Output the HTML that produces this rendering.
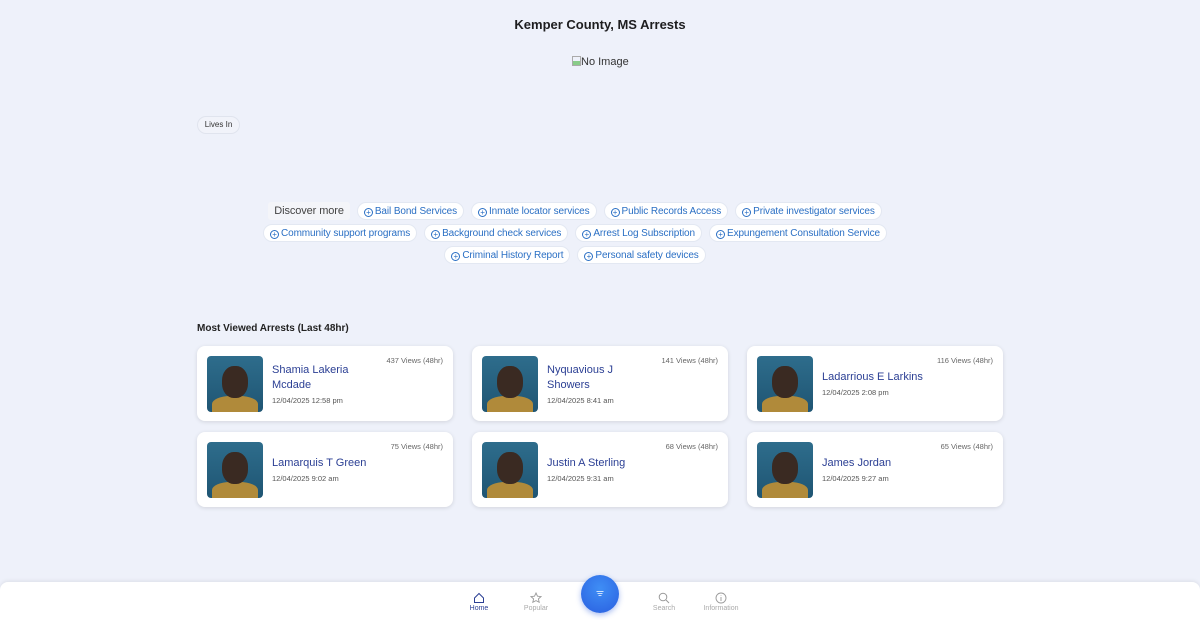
<!DOCTYPE html>
<html><head><meta charset="utf-8"><style>
*{box-sizing:border-box;margin:0;padding:0}
body{width:1200px;height:620px;overflow:hidden;background:#eef1fa;font-family:"Liberation Sans",sans-serif;position:relative;color:#222}
h1{position:absolute;top:17px;left:0;width:1200px;text-align:center;font-size:13px;font-weight:bold;color:#1d1d1f}
.noimg{position:absolute;top:56px;left:572px;font-size:11px;color:#333}
.noimg span{display:inline-block;width:9px;height:10px;border:1px solid #aaa;background:linear-gradient(#8c8 0 0) bottom/100% 4px no-repeat;vertical-align:-1px}
.lives{position:absolute;top:116px;left:197px;height:18px;width:43px;border:1px solid #e0e4ee;border-radius:9px;font-size:8px;line-height:16px;text-align:center;color:#333;background:#f1f3fa}
.pills{position:absolute;top:202px;left:240px;width:670px;display:flex;flex-wrap:wrap;justify-content:center;gap:4px 7px}
.p{height:18px;padding:0 6px;border-radius:9px;background:#fff;font-size:10px;line-height:18px;color:#2a6fc4;white-space:nowrap;letter-spacing:-0.1px;border:1px solid #e3e8f2}
.p i{display:inline-block;width:9px;height:9px;border:1px solid #2a6fc4;border-radius:50%;font-style:normal;font-size:8px;line-height:7px;text-align:center;margin-right:2px;vertical-align:-1px}
.p.d{color:#444;background:#f4f5f9;border-radius:3px;font-size:11px;border:none}
h2{position:absolute;top:323px;left:197px;font-size:10px;font-weight:bold;color:#222}
.c{position:absolute;width:256px;height:75px;background:#fff;border-radius:8px;box-shadow:0 1px 4px rgba(0,0,0,.12)}
.ph{position:absolute;left:10px;top:10px;width:56px;height:56px;border-radius:4px;background:linear-gradient(#2e6d8c,#1f5573);overflow:hidden}
.ph:after{content:"";position:absolute;left:15px;top:10px;width:26px;height:32px;border-radius:45%;background:#3a2a22}
.ph:before{content:"";position:absolute;left:5px;top:40px;width:46px;height:20px;border-radius:40% 40% 0 0;background:#b08a3a}
.v{position:absolute;right:10px;top:10px;font-size:7.5px;color:#666}
.t{position:absolute;left:75px;top:0;height:75px;display:flex;flex-direction:column;justify-content:center;width:120px}
.n{font-size:11px;color:#2b3f94;line-height:15px}
.dt{font-size:7.5px;color:#555;margin-top:3px}
.nav{position:absolute;left:0;top:582px;width:1200px;height:38px;background:#fff;border-radius:8px 8px 0 0;box-shadow:0 -1px 4px rgba(0,0,0,.08)}
.it{position:absolute;top:10px;font-size:7px;color:#aaa;text-align:center;width:60px}
.it svg{display:block;margin:0 auto 1px}
.fab{position:absolute;left:581px;top:575px;width:38px;height:38px;border-radius:50%;background:radial-gradient(circle at 50% 35%,#3f8ef5,#2a5fe0);box-shadow:0 2px 6px rgba(40,90,220,.4)}
</style></head><body>
<h1>Kemper County, MS Arrests</h1>
<div class="noimg"><span></span>No Image</div>
<div class="lives">Lives In</div>
<div class="pills">
<div class="p d">Discover more</div>
<div class="p"><i>+</i>Bail Bond Services</div>
<div class="p"><i>+</i>Inmate locator services</div>
<div class="p"><i>+</i>Public Records Access</div>
<div class="p"><i>+</i>Private investigator services</div>
<div class="p"><i>+</i>Community support programs</div>
<div class="p"><i>+</i>Background check services</div>
<div class="p"><i>+</i>Arrest Log Subscription</div>
<div class="p"><i>+</i>Expungement Consultation Service</div>
<div class="p"><i>+</i>Criminal History Report</div>
<div class="p"><i>+</i>Personal safety devices</div>
</div>
<h2>Most Viewed Arrests (Last 48hr)</h2>
<div class="c" style="left:197px;top:346px"><div class="ph"></div><div class="v">437 Views (48hr)</div><div class="t"><div class="n">Shamia Lakeria<br>Mcdade</div><div class="dt">12/04/2025 12:58 pm</div></div></div>
<div class="c" style="left:472px;top:346px"><div class="ph"></div><div class="v">141 Views (48hr)</div><div class="t"><div class="n">Nyquavious J<br>Showers</div><div class="dt">12/04/2025 8:41 am</div></div></div>
<div class="c" style="left:747px;top:346px"><div class="ph"></div><div class="v">116 Views (48hr)</div><div class="t"><div class="n">Ladarrious E Larkins</div><div class="dt">12/04/2025 2:08 pm</div></div></div>
<div class="c" style="left:197px;top:432px"><div class="ph"></div><div class="v">75 Views (48hr)</div><div class="t"><div class="n">Lamarquis T Green</div><div class="dt">12/04/2025 9:02 am</div></div></div>
<div class="c" style="left:472px;top:432px"><div class="ph"></div><div class="v">68 Views (48hr)</div><div class="t"><div class="n">Justin A Sterling</div><div class="dt">12/04/2025 9:31 am</div></div></div>
<div class="c" style="left:747px;top:432px"><div class="ph"></div><div class="v">65 Views (48hr)</div><div class="t"><div class="n">James Jordan</div><div class="dt">12/04/2025 9:27 am</div></div></div>
<div class="nav">
<div class="it" style="left:449px;color:#2b3f94"><svg width="12" height="12" viewBox="0 0 12 12" fill="none" stroke="#2b3f94" stroke-width="1"><path d="M1.5 6L6 1.5 10.5 6V10.5H1.5Z"/></svg>Home</div>
<div class="it" style="left:506px"><svg width="12" height="12" viewBox="0 0 12 12" fill="none" stroke="#999" stroke-width="0.9"><path d="M6 1l1.5 3.2 3.5.4-2.6 2.3.8 3.4L6 8.6 2.8 10.3l.8-3.4L1 4.6l3.5-.4z"/></svg>Popular</div>
<div class="it" style="left:634px"><svg width="12" height="12" viewBox="0 0 12 12" fill="none" stroke="#999" stroke-width="1"><circle cx="5" cy="5" r="3.8"/><path d="M8 8l3 3"/></svg>Search</div>
<div class="it" style="left:691px"><svg width="12" height="12" viewBox="0 0 12 12" fill="none" stroke="#999" stroke-width="0.9"><circle cx="6" cy="6" r="5"/><path d="M6 5v4M6 3.2v.6"/></svg>Information</div>
</div>
<div class="fab"><svg width="38" height="38" viewBox="0 0 38 38" fill="none" stroke="#fff" stroke-width="0.8"><path d="M15.5 16.5h7M16.5 18.5h5M17.5 20.5h3"/></svg></div>
</body></html>
